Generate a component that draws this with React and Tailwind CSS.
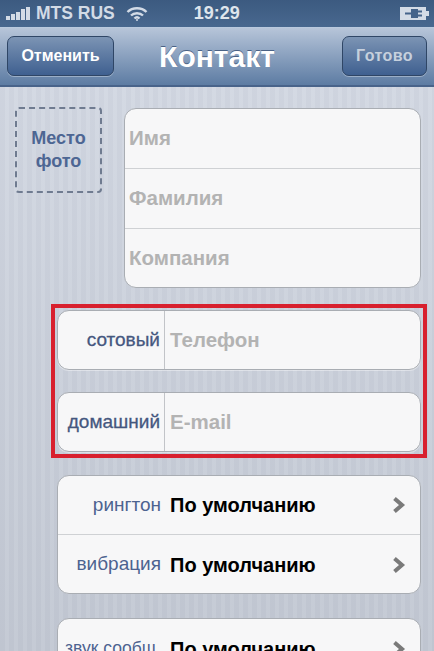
import React from "react";

const font = { sans: "font-['Liberation_Sans',Arial,sans-serif]" };

function Row({ label, value, last, small }) {
  return (
    <div className={`flex items-stretch h-[59px] shrink-0 ${last ? "" : "border-b border-[#cfd1d4]"}`}>
      <div className={`w-[103px] shrink-0 flex items-center justify-end whitespace-nowrap overflow-hidden text-[#4d6390] ${small ? "text-[17.5px]" : "text-[19px]"}`}>
        {label}
      </div>
      <div className="flex-1 flex items-center pl-[9px] pr-[14px]">
        <span className="text-[20px] font-bold text-black">{value}</span>
        <svg className="ml-auto" width="14" height="18" viewBox="0 0 14 18">
          <path d="M2.5 2.5 L10 9 L2.5 15.5" fill="none" stroke="#7a7a7a" strokeWidth="4" />
        </svg>
      </div>
    </div>
  );
}

function FieldRow({ label, placeholder }) {
  return (
    <div className="h-[60px] bg-[#f7f7f8] rounded-[12px] border border-[#a9adb3] shadow-[0_1px_0_#ffffff66] flex items-stretch">
      <div className="w-[107px] shrink-0 flex items-center justify-end pr-[4px] text-[19px] text-[#45577f] [-webkit-text-stroke:0.3px_#45577f] border-r border-[#c2c4c8]">
        {label}
      </div>
      <div className="flex-1 flex items-center pl-[5px] text-[20.5px] font-bold text-[#b3b3b3]">{placeholder}</div>
    </div>
  );
}

function NavButton({ children, dim, w }) {
  return (
    <div className={`${w} h-[40px] rounded-[7px] border border-[#2f4666] bg-gradient-to-b from-[#7c94b4] to-[#3f6090] shadow-[0_1px_0_#ffffff55] flex items-center justify-center text-[16px] font-bold ${dim ? "text-[#c6d0dd] tracking-[0.4px]" : "text-white"}`}>
      {children}
    </div>
  );
}

export default function App() {
  return (
    <div className={`w-[434px] h-[651px] overflow-hidden flex flex-col ${font.sans} bg-[#cdd3de] bg-[linear-gradient(180deg,#ffffff1c,#0000000f),repeating-linear-gradient(90deg,#cbd1dd_0px,#cbd1dd_5px,#d1d7e2_5px,#d1d7e2_9px)]`}>
      {/* status bar */}
      <div className="h-[27px] shrink-0 bg-gradient-to-b from-[#3c5a80] to-[#48688f] flex items-center pl-[6px] pr-[4px] text-[#d3dbe6] text-[17.5px] font-bold">
        <svg width="26" height="16" viewBox="0 0 26 16" fill="#d3dbe6">
          <rect x="0" y="10" width="4" height="4" />
          <rect x="5" y="8" width="4" height="6" />
          <rect x="10" y="6" width="4" height="8" />
          <rect x="15" y="3" width="4" height="11" />
          <rect x="20" y="1" width="4" height="13" />
        </svg>
        <span className="ml-[4px]">MTS RUS</span>
        <svg className="ml-[11px]" width="22" height="16" viewBox="0 0 22 16" fill="none" stroke="#d3dbe6" strokeWidth="2.4">
          <path d="M1.5 6 C6.5 1 15.5 1 20.5 6" />
          <path d="M5 9.5 C8 6.5 14 6.5 17 9.5" />
          <path d="M8.5 12.5 C10 11 12 11 13.5 12.5" />
          <circle cx="11" cy="14" r="1" fill="#d3dbe6" stroke="none" />
        </svg>
        <span className="ml-[46px] text-[18px] text-[#dfe5ec]">19:29</span>
        <svg className="ml-auto" width="30" height="15" viewBox="0 0 30 15">
          <rect x="0" y="1" width="26" height="13" fill="#d3dbe6" />
          <rect x="26" y="5" width="3" height="5" fill="#d3dbe6" />
          <path d="M5 7.5 H12 M12 4 H17 V11 H12 Z M17 5.5 H22 M17 9.5 H22" stroke="#44638a" strokeWidth="2" fill="#44638a" />
        </svg>
      </div>

      {/* nav bar */}
      <div className="h-[60px] shrink-0 border-t border-[#b9c9de] border-b-2 border-b-[#48638a] bg-gradient-to-b from-[#b7c5d9] to-[#5d7ca3] flex items-center px-[7px] pb-[1px]">
        <div className="flex-1">
          <NavButton w="w-[107px]">Отменить</NavButton>
        </div>
        <span className="text-[30px] font-bold text-white [text-shadow:0_-1px_0_#4a6285]">Контакт</span>
        <div className="flex-1 flex justify-end">
          <NavButton w="w-[85px]" dim>Готово</NavButton>
        </div>
      </div>

      {/* form */}
      <div className="flex-1 flex flex-col pt-[21px] pr-[13px]">
        <div className="flex items-start">
          <div className="ml-[15px] mt-[-1px] w-[87px] h-[86px] shrink-0 rounded-[4px] border-2 border-dashed border-[#6f7b90] flex items-center justify-center text-center text-[18px] leading-[23px] font-bold text-[#4d6693]">
            <span>
              Место
              <br />
              фото
            </span>
          </div>
          <div className="ml-[22px] flex-1 h-[180px] bg-[#f7f7f8] rounded-[12px] border border-[#a9adb3] flex flex-col">
            <div className="h-[60px] border-b border-[#cfd1d4] flex items-center pl-[4px] text-[20.5px] font-bold text-[#b3b3b3]">Имя</div>
            <div className="h-[60px] border-b border-[#cfd1d4] flex items-center pl-[4px] text-[20.5px] font-bold text-[#b3b3b3]">Фамилия</div>
            <div className="flex-1 flex items-center pl-[4px] text-[20.5px] font-bold text-[#b3b3b3]">Компания</div>
          </div>
        </div>

        <div className="mt-[16px] ml-[51px] mr-[-6px] h-[154px] shrink-0 border-[4px] border-[#d8202e] px-[2px] pt-[2px] flex flex-col gap-[22px]">
          <FieldRow label="сотовый" placeholder="Телефон" />
          <FieldRow label="домашний" placeholder="E-mail" />
        </div>

        <div className="mt-[17px] ml-[57px] h-[119px] shrink-0 bg-[#f7f7f8] rounded-[12px] border border-[#a9adb3] flex flex-col">
          <Row label="рингтон" value="По умолчанию" />
          <Row label="вибрация" value="По умолчанию" last />
        </div>

        <div className="mt-[24px] ml-[57px] h-[60px] shrink-0 bg-[#f7f7f8] rounded-[12px] border border-[#a9adb3] flex flex-col">
          <Row label="звук сообщ." value="По умолчанию" last small />
        </div>
      </div>
    </div>
  );
}
